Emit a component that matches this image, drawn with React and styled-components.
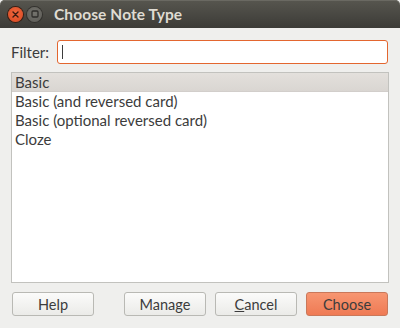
import React from "react";
import styled, { createGlobalStyle } from "styled-components";

const Global = createGlobalStyle`
  html, body { margin: 0; padding: 0; background: #efefed; }
  body { font-family: Lato, "Noto Sans", sans-serif; }
`;

const Window = styled.div`
  width: 400px;
  height: 328px;
  display: flex;
  flex-direction: column;
  background: #efefed;
  overflow: hidden;
`;

const TitleBar = styled.div`
  height: 28px;
  flex: none;
  display: flex;
  align-items: center;
  padding-left: 8px;
  border-radius: 5px 5px 0 0;
  background: linear-gradient(#57564f, #3c3b37);
  box-shadow: inset 0 1px 0 #6a6962;
`;

const WinButton = styled.div`
  width: 15px;
  height: 15px;
  border-radius: 50%;
  margin-right: 4px;
  display: flex;
  align-items: center;
  justify-content: center;
  background: ${p => (p.$close ? "radial-gradient(circle at 50% 40%, #f0683e, #d9461f)" : "radial-gradient(circle at 50% 40%, #74736d, #5b5a55)")};
  box-shadow: 0 0 0 1px ${p => (p.$close ? "#3a1d12" : "#33322e")};
`;

const Title = styled.div`
  margin-left: 8px;
  color: #dfdbd2;
  font-weight: 700;
  font-size: 15.5px;
  letter-spacing: 0.1px;
`;

const Body = styled.div`
  flex: 1;
  display: flex;
  flex-direction: column;
  padding: 12px 11px 12px 11px;
`;

const FilterRow = styled.div`
  display: flex;
  align-items: center;
  height: 24px;
  padding-right: 1px;
`;

const Label = styled.div`
  width: 46px;
  color: #3c3c3c;
  font-size: 15px;
`;

const FakeInput = styled.div`
  flex: 1;
  height: 24px;
  box-sizing: border-box;
  border: 1px solid #e3662f;
  border-radius: 3px;
  background: #fff;
  display: flex;
  align-items: center;
  padding-left: 4px;
`;

const Caret = styled.span`
  width: 1px;
  height: 14px;
  background: #3c3c3c;
`;

const List = styled.div`
  margin-top: 8px;
  height: 211px;
  box-sizing: border-box;
  border: 1px solid #c2c2be;
  background: #fff;
  display: flex;
  flex-direction: column;
`;

const Row = styled.div`
  height: 19px;
  line-height: 19px;
  padding-left: 3px;
  font-size: 15px;
  color: #3c3c3c;
  background: ${p => (p.$selected ? "linear-gradient(#e3e0dc, #d9d5d1)" : "transparent")};
  box-shadow: ${p => (p.$selected ? "inset 0 -1px 0 #d2cecb" : "none")};
`;

const Buttons = styled.div`
  margin-top: 9px;
  display: flex;
  gap: 9px;
  padding: 0 1px;
`;

const Button = styled.div`
  width: 82px;
  height: 24px;
  box-sizing: border-box;
  border-radius: 3px;
  display: flex;
  align-items: center;
  justify-content: center;
  font-size: 14.5px;
  color: #3c3c3c;
  border: 1px solid ${p => (p.$primary ? "#c9785a" : "#b9b9b4")};
  background: ${p => (p.$primary ? "linear-gradient(#f79671, #ef7a54)" : "linear-gradient(#fbfbfa, #ebebe8)")};
  margin-left: ${p => (p.$push ? "auto" : "0")};
`;

export default function App() {
  const items = ["Basic", "Basic (and reversed card)", "Basic (optional reversed card)", "Cloze"];
  return (
    <Window>
      <Global />
      <TitleBar>
        <WinButton $close>
          <svg width="7" height="7" viewBox="0 0 7 7">
            <path d="M1 1L6 6M6 1L1 6" stroke="#3a1a10" strokeWidth="1.4" strokeLinecap="round" />
          </svg>
        </WinButton>
        <WinButton>
          <svg width="8" height="8" viewBox="0 0 8 8">
            <rect x="1" y="1" width="6" height="6" rx="1" fill="none" stroke="#2e2d2a" strokeWidth="1.3" />
          </svg>
        </WinButton>
        <Title>Choose Note Type</Title>
      </TitleBar>
      <Body>
        <FilterRow>
          <Label>Filter:</Label>
          <FakeInput>
            <Caret />
          </FakeInput>
        </FilterRow>
        <List>
          {items.map((t, i) => (
            <Row key={t} $selected={i === 0}>{t}</Row>
          ))}
        </List>
        <Buttons>
          <Button>Help</Button>
          <Button $push>Manage</Button>
          <Button><span><u>C</u>ancel</span></Button>
          <Button $primary>Choose</Button>
        </Buttons>
      </Body>
    </Window>
  );
}
